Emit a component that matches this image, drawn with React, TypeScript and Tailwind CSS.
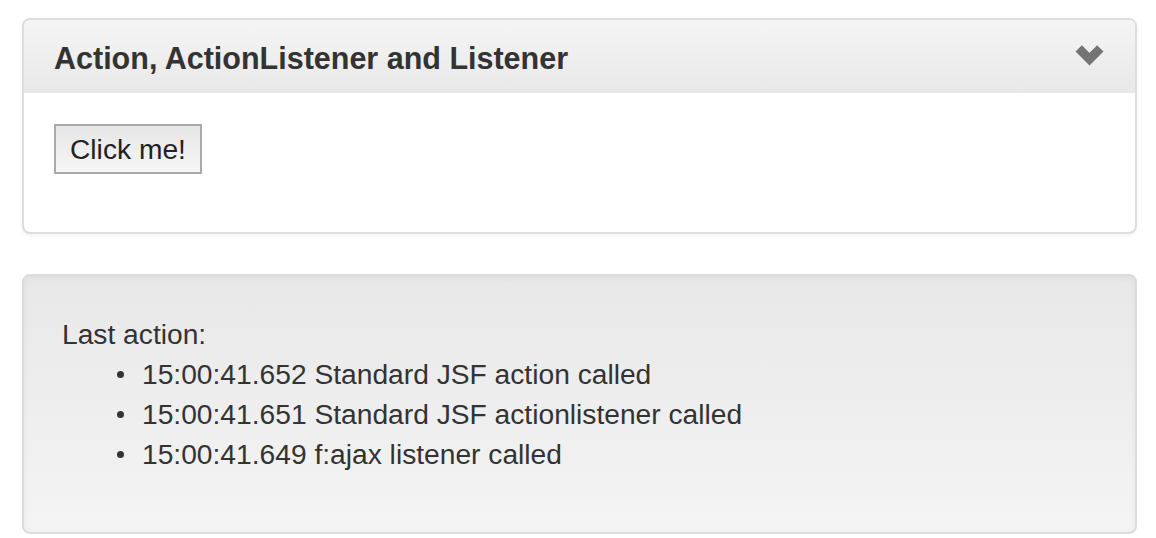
const entries = [
  "15:00:41.652 Standard JSF action called",
  "15:00:41.651 Standard JSF actionlistener called",
  "15:00:41.649 f:ajax listener called",
];

const ChevronDown = () => (
  <svg width="29" height="21" viewBox="0 0 29 21" aria-hidden="true">
    <polyline
      points="3.7,3.4 14.5,14.2 25.3,3.4"
      fill="none"
      stroke="#747474"
      strokeWidth="9"
      strokeLinecap="butt"
      strokeLinejoin="miter"
    />
  </svg>
);

const App = () => {
  return (
    <div className="min-h-screen bg-white pt-[18px] pl-[22px] pr-[19px] font-['Liberation_Sans',Arial,sans-serif] text-[28.2px] leading-[40px] text-[#333333]">
      <div className="rounded-[8px] border-2 border-[#dddddd] bg-white shadow-[0_2px_4px_rgba(0,0,0,0.05)] overflow-hidden">
        <div className="flex h-[73px] items-center justify-between bg-gradient-to-b from-[#f5f5f5] to-[#e8e8e8] pl-[30px] pr-[31px]">
          <h3 className="text-[30.5px] font-bold leading-[34px] pt-[3px]">
            Action, ActionListener and Listener
          </h3>
          <div className="-mt-[2px]">
            <ChevronDown />
          </div>
        </div>

        <div className="px-[30px] pt-[31px] pb-[58px]">
          <button className="flex h-[50px] items-center border-2 border-[#aaaaaa] bg-gradient-to-b from-[#e6e6e6] to-[#f6f6f6] px-[14px] text-[28.2px] text-[#222222]">
            Click me!
          </button>
        </div>
      </div>

      <div className="mt-[40px] rounded-[8px] border-2 border-[#dcdcdc] bg-gradient-to-b from-[#e8e8e8] to-[#f4f4f4] px-[38px] pt-[38px] pb-[58px] shadow-[inset_0_2px_6px_rgba(0,0,0,0.05)]">
        <div>Last action:</div>
        <ul className="pl-[80px]">
          {entries.map((entry) => (
            <li key={entry} className="flex items-center">
              <span className="-ml-[25px] mr-[18px] h-[7px] w-[7px] shrink-0 rounded-full bg-[#333333]" />
              {entry}
            </li>
          ))}
        </ul>
      </div>
    </div>
  );
};

export default App;
